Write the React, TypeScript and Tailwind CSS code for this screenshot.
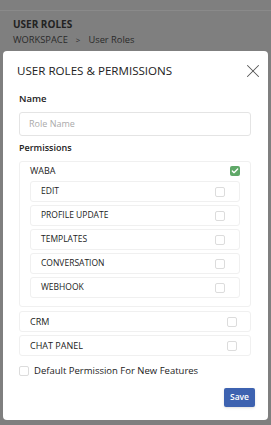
import { X, Check } from "lucide-react";

const wabaItems = ["EDIT", "PROFILE UPDATE", "TEMPLATES", "CONVERSATION", "WEBHOOK"];

function Box({ checked = false }: { checked?: boolean }) {
  if (checked) {
    return (
      <span className="flex h-[10px] w-[10px] items-center justify-center rounded-[2px] bg-[#5fa868]">
        <Check className="h-[8px] w-[8px] text-white" strokeWidth={4} />
      </span>
    );
  }
  return <span className="block h-[10px] w-[10px] rounded-[2px] border border-[#dcdcdc] bg-white" />;
}

export default function App() {
  return (
    <div
      className="h-[425px] w-[271px] overflow-hidden bg-[#7f7f7f]"
      style={{ fontFamily: '"Open Sans", "Noto Sans", sans-serif' }}
    >
      {/* Page behind the overlay */}
      <div className="mt-[10px] border-t border-[#8a8a8a] px-[13px] pt-[6px]">
        <div className="text-[10px] font-bold leading-[14px] text-[#222]">USER ROLES</div>
        <div className="mt-[2px] flex items-center gap-[8px] text-[9.3px] leading-[14px] text-[#2a2a2a]">
          <span>WORKSPACE</span>
          <span className="text-[8px]">&gt;</span>
          <span>User Roles</span>
        </div>
      </div>

      {/* Modal */}
      <div className="mx-[3px] mt-[4px] h-[369px] rounded-[4px] bg-white px-[16px] pt-[12px] text-[#222]">
        <div className="flex h-[16px] items-center justify-between">
          <h2 className="-ml-[2px] text-[11.6px] font-normal leading-[16px] text-[#222]">
            USER ROLES &amp; PERMISSIONS
          </h2>
          <X className="-mr-[12px] h-[22px] w-[22px] text-[#555]" strokeWidth={1.1} />
        </div>

        <div className="mt-[13px] text-[9.5px] font-semibold leading-[14px]">Name</div>
        <div className="mt-[6px] flex h-[24px] w-[232px] items-center rounded-[3px] border border-[#e4e4e4] px-[9px] text-[9px] text-[#aaa]">
          Role Name
        </div>

        <div className="mt-[5px] text-[9px] font-semibold leading-[14px]">Permissions</div>

        <div className="mt-[6px] w-[232px] rounded-[3px] border border-[#f0f0f0] px-[10px] pb-[8px] pt-[2px]">
          <div className="flex h-[13px] items-center justify-between text-[9px] font-medium">
            <span>WABA</span>
            <Box checked />
          </div>
          <div className="mt-[4px] flex flex-col gap-[3px]">
            {wabaItems.map((item) => (
              <div
                key={item}
                className="flex h-[21px] items-center justify-between rounded-[3px] border border-[#f0f0f0] pl-[10px] pr-[14px] text-[8.5px] font-medium"
              >
                <span>{item}</span>
                <Box />
              </div>
            ))}
          </div>
        </div>

        <div className="mt-[4px] flex w-[232px] flex-col gap-[3px]">
          {["CRM", "CHAT PANEL"].map((item) => (
            <div
              key={item}
              className="flex h-[21px] items-center justify-between rounded-[3px] border border-[#f0f0f0] pl-[10px] pr-[13px] text-[9px] font-medium"
            >
              <span>{item}</span>
              <Box />
            </div>
          ))}
        </div>

        <div className="mt-[8px] flex h-[14px] items-center gap-[5px] text-[9.5px] font-medium">
          <Box />
          <span>Default Permission For New Features</span>
        </div>

        <div className="mt-[10px] flex justify-end">
          <button className="-mr-[3px] h-[19px] rounded-[2px] bg-[#3d62b0] px-[6px] text-[8.5px] font-semibold text-white shadow-sm">
            Save
          </button>
        </div>
      </div>
    </div>
  );
}
